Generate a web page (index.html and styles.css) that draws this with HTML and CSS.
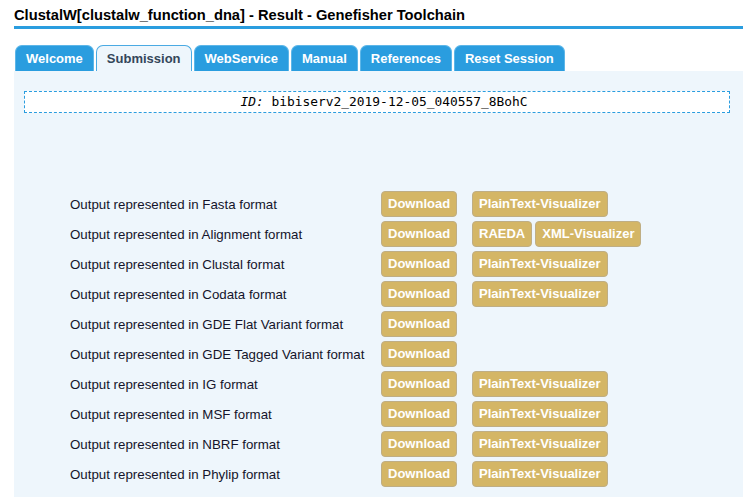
FILE: index.html
```html
<!DOCTYPE html>
<html>
<head>
<meta charset="utf-8">
<link rel="stylesheet" href="styles.css">
</head>
<body>
<div class="page">
  <h1 class="title">ClustalW[clustalw_function_dna] - Result - Genefisher Toolchain</h1>
  <ul class="tabs">
    <li class="tab">Welcome</li>
    <li class="tab active">Submission</li>
    <li class="tab">WebService</li>
    <li class="tab">Manual</li>
    <li class="tab">References</li>
    <li class="tab">Reset Session</li>
  </ul>
  <div class="panel">
    <div class="idbox"><span class="idlabel">ID:</span> bibiserv2_2019-12-05_040557_8BohC</div>
    <div class="results">
      <div class="label">Output represented in Fasta format</div>
      <div class="dl"><span class="btn">Download</span></div>
      <div class="vis"><span class="btn">PlainText-Visualizer</span></div>

      <div class="label">Output represented in Alignment format</div>
      <div class="dl"><span class="btn">Download</span></div>
      <div class="vis"><span class="btn">RAEDA</span><span class="btn">XML-Visualizer</span></div>

      <div class="label">Output represented in Clustal format</div>
      <div class="dl"><span class="btn">Download</span></div>
      <div class="vis"><span class="btn">PlainText-Visualizer</span></div>

      <div class="label">Output represented in Codata format</div>
      <div class="dl"><span class="btn">Download</span></div>
      <div class="vis"><span class="btn">PlainText-Visualizer</span></div>

      <div class="label">Output represented in GDE Flat Variant format</div>
      <div class="dl"><span class="btn">Download</span></div>
      <div class="vis"></div>

      <div class="label">Output represented in GDE Tagged Variant format</div>
      <div class="dl"><span class="btn">Download</span></div>
      <div class="vis"></div>

      <div class="label">Output represented in IG format</div>
      <div class="dl"><span class="btn">Download</span></div>
      <div class="vis"><span class="btn">PlainText-Visualizer</span></div>

      <div class="label">Output represented in MSF format</div>
      <div class="dl"><span class="btn">Download</span></div>
      <div class="vis"><span class="btn">PlainText-Visualizer</span></div>

      <div class="label">Output represented in NBRF format</div>
      <div class="dl"><span class="btn">Download</span></div>
      <div class="vis"><span class="btn">PlainText-Visualizer</span></div>

      <div class="label">Output represented in Phylip format</div>
      <div class="dl"><span class="btn">Download</span></div>
      <div class="vis"><span class="btn">PlainText-Visualizer</span></div>
    </div>
  </div>
</div>
</body>
</html>
```

FILE: styles.css
```css
html, body {
  margin: 0;
  padding: 0;
  background: #ffffff;
  font-family: "Liberation Sans", Arial, sans-serif;
  overflow: hidden;
}

.page {
  padding-left: 14px;
}

.title {
  margin: 0;
  padding-top: 7px;
  height: 19px;
  font-size: 14.7px;
  font-weight: bold;
  color: #000;
  border-bottom: 3px solid #2a9ddf;
  line-height: 17px;
}

.tabs {
  list-style: none;
  margin: 16px 0 0 1px;
  padding: 0;
  display: flex;
  gap: 2px;
  height: 26px;
}

.tab {
  box-sizing: border-box;
  height: 26px;
  padding: 0 10px;
  background: #2a9ddf;
  color: #ffffff;
  font-weight: bold;
  font-size: 13px;
  line-height: 25px;
  border: 1px solid #5db6e8;
  border-bottom: none;
  border-radius: 7px 7px 0 0;
}

.tab.active {
  background: #eef6fc;
  color: #34465a;
  border-color: #4aaae3;
}

.panel {
  background: #eef6fc;
  height: 426px;
  padding-top: 20px;
  box-sizing: border-box;
}

.idbox {
  margin: 0 13px 0 10px;
  height: 22px;
  box-sizing: border-box;
  border: 1px dashed #2a9ddf;
  background: #ffffff;
  font-family: "DejaVu Sans Mono", monospace;
  font-size: 12.9px;
  line-height: 20px;
  text-align: center;
  padding-left: 14px;
  color: #000;
}

.idlabel {
  font-style: italic;
}

.results {
  margin-top: 76px;
  margin-left: 56px;
  display: grid;
  grid-template-columns: 311px 91px auto;
  grid-auto-rows: 30px;
  align-items: center;
}

.label {
  font-size: 13.3px;
  color: #14142a;
}

.vis {
  display: flex;
  gap: 3px;
}

.btn {
  display: inline-block;
  box-sizing: border-box;
  height: 26px;
  line-height: 24px;
  padding: 0 6px;
  background: #d4b666;
  border: 1px solid #bfae84;
  border-radius: 4px;
  color: #ffffff;
  font-weight: bold;
  font-size: 13px;
}
```
